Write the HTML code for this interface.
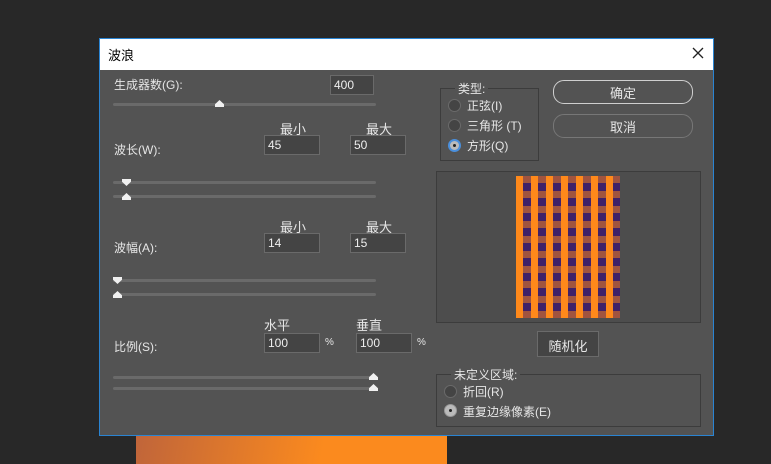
<!DOCTYPE html>
<html><head><meta charset="utf-8"><style>
*{margin:0;padding:0;box-sizing:border-box}
body{width:771px;height:464px;background:#282828;position:relative;overflow:hidden;font-family:"Liberation Sans","Noto Sans CJK SC",sans-serif;font-size:12px;color:#e6e6e6}
.a{position:absolute}
#dlg{left:99px;top:38px;width:615px;height:398px;background:#535353;border:1px solid #2a84d2}
#tb{left:0;top:0;width:613px;height:31px;background:#fff;color:#000;font-size:13px;padding:6px 0 0 8px}
.in{background:#444;border:1px solid #6a6a6a;height:20px;color:#eee;padding:2px 0 0 3px;font-size:12px}
.tr{height:3px;background:#6a6a6a;border-radius:2px}
.th{width:9px;height:7px;background:#f0f0f0;clip-path:polygon(50% 0,100% 60%,100% 100%,0 100%,0 60%)}
.td{width:9px;height:7px;background:#f0f0f0;clip-path:polygon(0 0,100% 0,100% 40%,50% 100%,0 40%)}
.rad{width:13px;height:13px;border-radius:50%;background:#444;border:1px solid #6a6a6a}
.btn{border:1px solid #cfcfcf;border-radius:11px;height:24px;text-align:center;padding-top:2px;font-size:13px}
fieldset{position:absolute;border:1px solid #3c3c3c}
</style></head><body>
<div class="a" style="left:136px;top:436px;width:311px;height:28px;background:linear-gradient(100deg,#c0653a,#fb8a1e 60%)"></div>
<div class="a" id="dlg">
<div class="a" id="tb">波浪<svg class="a" style="left:592px;top:8px" width="12" height="12"><path d="M1 1L11 11M11 1L1 11" stroke="#222" stroke-width="1.3"/></svg></div>
</div>
<div class="a" style="left:114px;top:76px">生成器数(G):</div>
<div class="a in" style="left:330px;top:75px;width:44px">400</div>
<div class="a tr" style="left:113px;top:103px;width:263px"></div>
<div class="a th" style="left:215px;top:100px"></div>

<div class="a" style="left:280px;top:119px;font-size:13px">最小</div>
<div class="a" style="left:366px;top:119px;font-size:13px">最大</div>
<div class="a" style="left:114px;top:141px">波长(W):</div>
<div class="a in" style="left:264px;top:135px;width:56px">45</div>
<div class="a in" style="left:350px;top:135px;width:56px">50</div>
<div class="a tr" style="left:113px;top:181px;width:263px"></div>
<div class="a td" style="left:122px;top:179px"></div>
<div class="a tr" style="left:113px;top:195px;width:263px"></div>
<div class="a th" style="left:122px;top:193px"></div>

<div class="a" style="left:280px;top:217px;font-size:13px">最小</div>
<div class="a" style="left:366px;top:217px;font-size:13px">最大</div>
<div class="a" style="left:114px;top:239px">波幅(A):</div>
<div class="a in" style="left:264px;top:233px;width:56px">14</div>
<div class="a in" style="left:350px;top:233px;width:56px">15</div>
<div class="a tr" style="left:113px;top:279px;width:263px"></div>
<div class="a td" style="left:113px;top:277px"></div>
<div class="a tr" style="left:113px;top:293px;width:263px"></div>
<div class="a th" style="left:113px;top:291px"></div>

<div class="a" style="left:264px;top:315px;font-size:13px">水平</div>
<div class="a" style="left:356px;top:315px;font-size:13px">垂直</div>
<div class="a" style="left:114px;top:338px">比例(S):</div>
<div class="a in" style="left:264px;top:333px;width:56px">100</div>
<div class="a" style="left:325px;top:337px;font-size:10px">%</div>
<div class="a in" style="left:356px;top:333px;width:56px">100</div>
<div class="a" style="left:417px;top:337px;font-size:10px">%</div>
<div class="a tr" style="left:113px;top:376px;width:263px"></div>
<div class="a th" style="left:369px;top:373px"></div>
<div class="a tr" style="left:113px;top:387px;width:263px"></div>
<div class="a th" style="left:369px;top:384px"></div>

<fieldset style="left:440px;top:80px;width:99px;height:81px;padding:0"><legend style="margin-left:14px;padding:0 3px;font-size:12px">类型:</legend></fieldset>
<div class="a rad" style="left:448px;top:99px"></div><div class="a" style="left:467px;top:97px">正弦(I)</div>
<div class="a rad" style="left:448px;top:119px"></div><div class="a" style="left:467px;top:117px">三角形 (T)</div>
<div class="a rad" style="left:448px;top:139px;background:#bbb;border:2px solid #4a8fdc"></div><div class="a" style="left:453px;top:144px;width:3px;height:3px;background:#222;border-radius:50%"></div><div class="a" style="left:467px;top:137px">方形(Q)</div>

<div class="a btn" style="left:553px;top:80px;width:140px">确定</div>
<div class="a btn" style="left:553px;top:114px;width:140px;border-color:#777">取消</div>

<div class="a" style="left:436px;top:171px;width:265px;height:152px;background:#4d4d4d;border:1px solid #3c3c3c"></div>
<svg class="a" style="left:516px;top:176px" width="104" height="142">
<defs><pattern id="p" width="15" height="15" patternUnits="userSpaceOnUse">
<rect width="15" height="15" fill="#a0543f"/><rect width="7" height="15" fill="#fe891b"/><rect x="7" y="7" width="8" height="8" fill="#3f2168"/></pattern></defs>
<rect width="104" height="142" fill="url(#p)"/></svg>

<div class="a" style="left:537px;top:331px;width:62px;height:26px;background:#444;border:1px solid #6a6a6a;text-align:center;padding-top:4px;font-size:13px">随机化</div>

<fieldset style="left:436px;top:366px;width:265px;height:61px;padding:0"><legend style="margin-left:14px;padding:0 3px;font-size:12px">未定义区域:</legend></fieldset>
<div class="a rad" style="left:444px;top:385px"></div><div class="a" style="left:463px;top:383px">折回(R)</div>
<div class="a rad" style="left:444px;top:404px;background:#bbb;border-color:#999"></div><div class="a" style="left:449px;top:409px;width:3px;height:3px;background:#222;border-radius:50%"></div><div class="a" style="left:463px;top:403px">重复边缘像素(E)</div>
</body></html>
